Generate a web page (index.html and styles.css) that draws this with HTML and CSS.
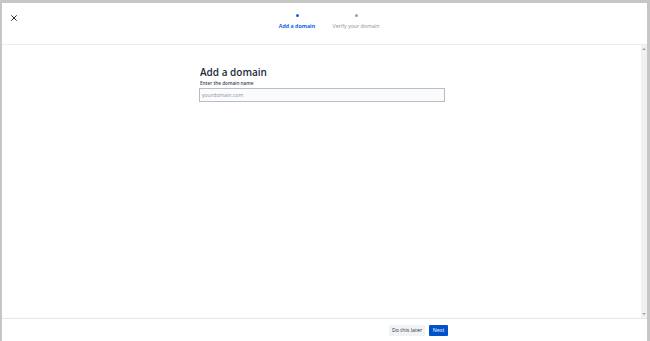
FILE: index.html
```html
<!DOCTYPE html>
<html>
<head>
<meta charset="utf-8">
<link rel="stylesheet" href="styles.css">
</head>
<body>
<div class="frame">
  <div class="window">
    <header class="header">
      <div class="close">
        <svg width="6" height="6" viewBox="0 0 6 6"><path d="M0.7 0.7 L5.3 5.3 M5.3 0.7 L0.7 5.3" stroke="#1d2b3a" stroke-width="1" stroke-linecap="square"/></svg>
      </div>
      <div class="steps">
        <div class="step active"><span class="dot"></span><span class="label">Add a domain</span></div>
        <div class="step"><span class="dot"></span><span class="label">Verify your domain</span></div>
      </div>
    </header>
    <div class="body">
      <main class="main">
        <section class="form">
          <h1 class="title">Add a domain</h1>
          <label class="field-label">Enter the domain name</label>
          <div class="input">yourdomain.com</div>
        </section>
      </main>
      <div class="scrollbar">
        <span class="arrow up"></span>
        <span class="arrow down"></span>
      </div>
    </div>
    <footer class="footer">
      <button class="btn secondary">Do this later</button>
      <button class="btn primary">Next</button>
    </footer>
  </div>
</div>
</body>
</html>
```
FILE: styles.css
```css
html, body {
  margin: 0;
  padding: 0;
  width: 650px;
  height: 341px;
  overflow: hidden;
  background: #c6c6c6;
  font-family: "Open Sans", "Noto Sans", sans-serif;
}
.frame {
  box-sizing: border-box;
  height: 341px;
  padding: 3px 3px 0 2px;
}
.window {
  background: #fff;
  height: 338px;
  display: flex;
  flex-direction: column;
}
.header {
  height: 41px;
  flex: none;
  border-bottom: 1px solid #ececec;
  position: relative;
  display: flex;
  justify-content: center;
}
.close {
  position: absolute;
  left: 9px;
  top: 12px;
  width: 6px;
  height: 6px;
  display: flex;
}
.steps {
  display: flex;
  padding-left: 4px;
  padding-top: 11px;
}
.step {
  width: 59px;
  display: flex;
  flex-direction: column;
  align-items: center;
}
.dot {
  width: 3px;
  height: 3px;
  border-radius: 50%;
  background: #9aa0aa;
}
.label {
  margin-top: 5px;
  font-size: 5.3px;
  color: #8a8f99;
  white-space: nowrap;
}
.step.active .dot { background: #0b5cff; }
.step.active .label { color: #1164e6; font-weight: 700; }
.body {
  flex: 1;
  display: flex;
  min-height: 0;
}
.main {
  flex: 1;
  display: flex;
  justify-content: center;
}
.form {
  width: 246px;
  margin-left: 1px;
  padding-top: 20px;
}
.title {
  margin: 0 0 0 1px;
  font-size: 10px;
  font-weight: 600;
  color: #1d2b3a;
  line-height: 14px;
}
.field-label {
  display: block;
  font-size: 4.7px;
  font-weight: 600;
  color: #3b4654;
  margin: 1px 0 0 1px;
  line-height: 7px;
}
.input {
  box-sizing: border-box;
  height: 14px;
  margin-top: 1px;
  border: 1px solid #b8bcc4;
  background: #fafbfc;
  font-size: 5.2px;
  color: #8d939c;
  padding-left: 2px;
  line-height: 12px;
}
.scrollbar {
  width: 6px;
  flex: none;
  background: #f1f1f1;
  display: flex;
  flex-direction: column;
  justify-content: space-between;
  align-items: center;
  padding: 3px 0 3px;
}
.arrow {
  width: 0;
  height: 0;
  border-left: 2px solid transparent;
  border-right: 2px solid transparent;
}
.arrow.up { border-bottom: 2px solid #a3a3a3; }
.arrow.down { border-top: 2px solid #a3a3a3; }
.footer {
  height: 22px;
  flex: none;
  border-top: 1px solid #e6e6e6;
  display: flex;
  justify-content: flex-end;
  align-items: center;
  gap: 4px;
  padding-right: 199px;
}
.btn {
  border: none;
  margin: 0;
  font-family: inherit;
  font-size: 5.3px;
  height: 11px;
  padding: 0;
  line-height: 11px;
  border-radius: 1px;
  white-space: nowrap;
  text-align: center;
}
.btn.secondary {
  background: #f1f2f4;
  color: #2a3442;
  width: 36px;
}
.btn.primary {
  background: #0052cc;
  color: #fff;
  width: 19px;
}
```
